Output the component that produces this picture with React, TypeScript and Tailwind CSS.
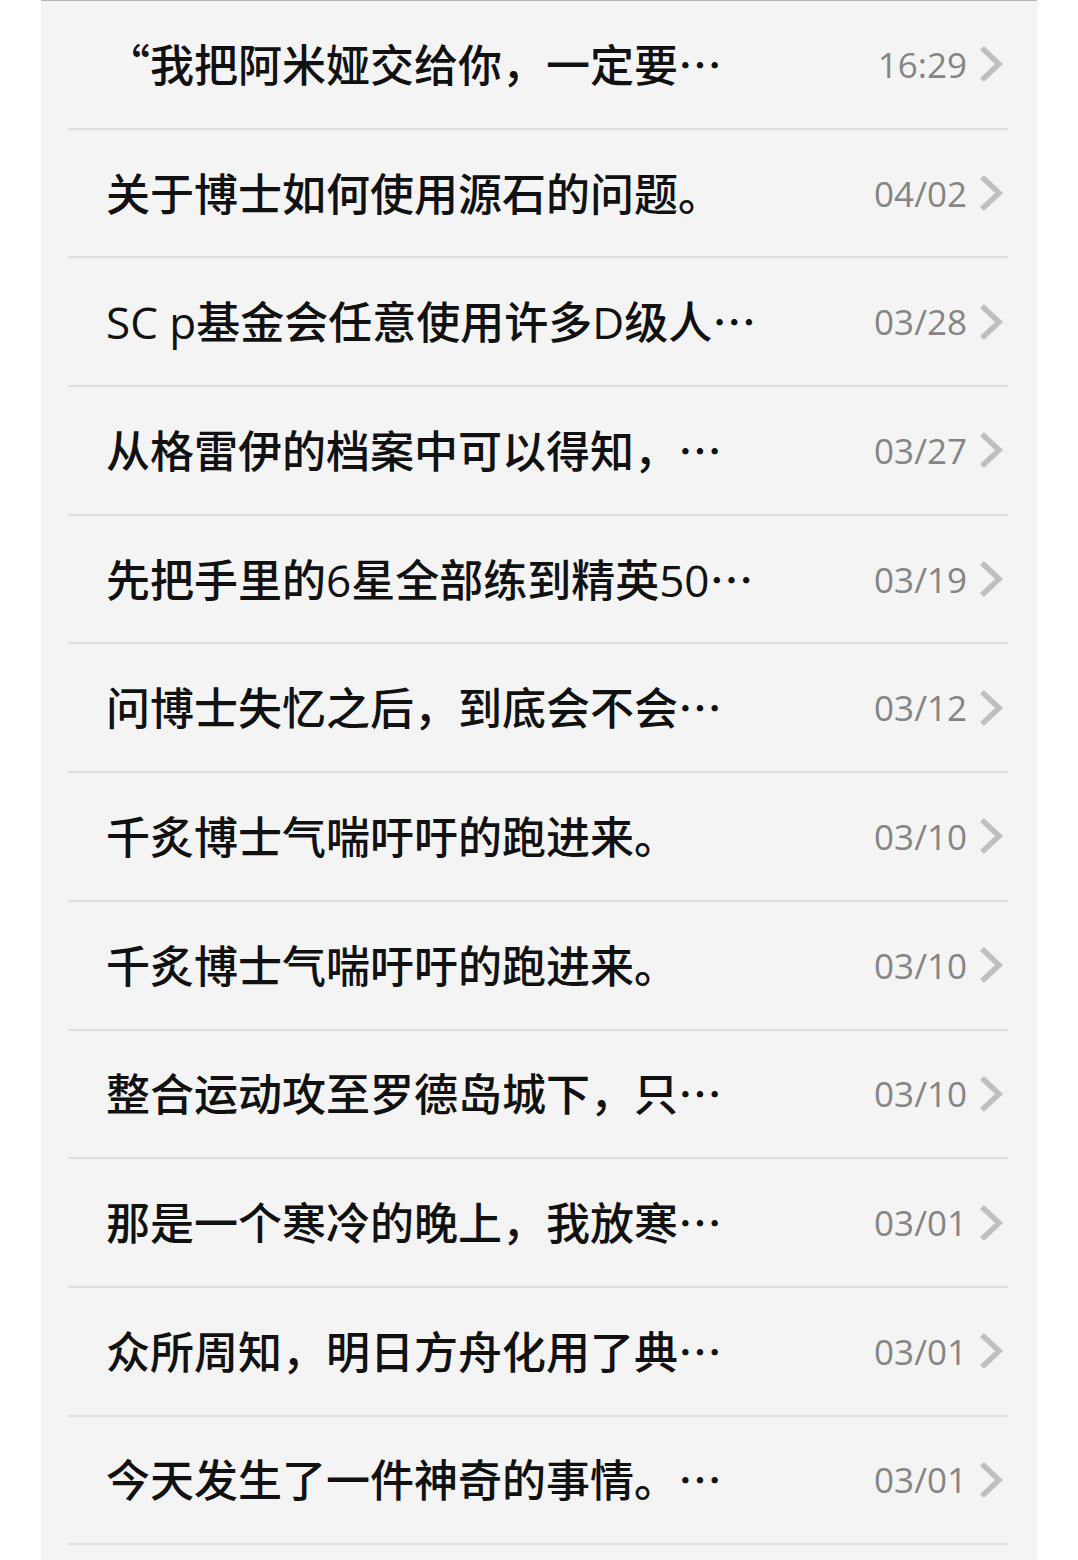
import React from 'react'

const items = [
  { title: '“我把阿米娅交给你，一定要…', time: '16:29' },
  { title: '关于博士如何使用源石的问题。', time: '04/02' },
  { title: 'SC p基金会任意使用许多D级人…', time: '03/28' },
  { title: '从格雷伊的档案中可以得知，…', time: '03/27' },
  { title: '先把手里的6星全部练到精英50…', time: '03/19' },
  { title: '问博士失忆之后，到底会不会…', time: '03/12' },
  { title: '千炙博士气喘吁吁的跑进来。', time: '03/10' },
  { title: '千炙博士气喘吁吁的跑进来。', time: '03/10' },
  { title: '整合运动攻至罗德岛城下，只…', time: '03/10' },
  { title: '那是一个寒冷的晚上，我放寒…', time: '03/01' },
  { title: '众所周知，明日方舟化用了典…', time: '03/01' },
  { title: '今天发生了一件神奇的事情。…', time: '03/01' },
]

// latin stays in Open Sans, everything else (incl. quotes / ellipsis) in the CJK face
function Title({ text }: { text: string }) {
  const runs: { s: string; cjk: boolean }[] = []
  for (const ch of text) {
    const cjk = ch.charCodeAt(0) > 127
    const last = runs[runs.length - 1]
    if (last && last.cjk === cjk) last.s += ch
    else runs.push({ s: ch, cjk })
  }
  return (
    <span className="whitespace-pre text-[44px] leading-none text-[#111111]">
      {runs.map((r, i) =>
        r.cjk ? (
          <span key={i} className="font-['Noto_Sans_CJK_SC',sans-serif] font-medium">{r.s}</span>
        ) : (
          <span key={i}>{r.s}</span>
        )
      )}
    </span>
  )
}

function Chevron() {
  return (
    <svg width="26" height="38" viewBox="0 0 26 38" className="shrink-0">
      <polyline
        points="4,3 21,19 4,35"
        fill="none"
        stroke="#bfbfbf"
        strokeWidth="5.5"
        strokeLinejoin="miter"
      />
    </svg>
  )
}

export default function App() {
  return (
    <div className="w-[1078px] h-[1560px] bg-white overflow-hidden font-['Open_Sans','Noto_Sans_CJK_SC',sans-serif]">
      <div className="mx-[41px] w-[996px] h-full bg-[#f4f4f4] border-t border-[#b4b4b4]">
        {items.map((item, i) => (
          <div
            key={i}
            className="ml-[27px] mr-[29px] h-[128.7px] border-b-2 border-[#dedede] flex items-center pl-[38px] pr-[4px]"
          >
            <div className="flex-1 min-w-0">
              <Title text={item.title} />
            </div>
            <span className="text-[35px] leading-none text-[#858585] mr-[11px]">{item.time}</span>
            <Chevron />
          </div>
        ))}
      </div>
    </div>
  )
}
